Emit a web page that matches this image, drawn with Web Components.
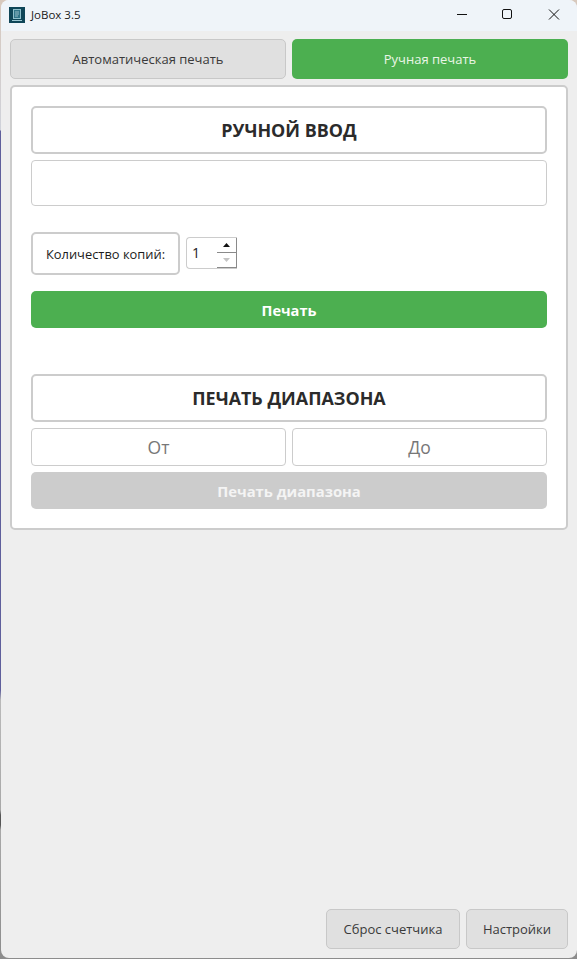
<!DOCTYPE html>
<html lang="ru">
<head>
<meta charset="utf-8">
<title>JoBox 3.5</title>
<style>
  html, body { margin: 0; height: 100%; }
  /* the desktop showing behind the window edge */
  body {
    width: 577px;
    height: 959px;
    overflow: hidden;
    font-family: "Open Sans", "Noto Sans", sans-serif;
    background: linear-gradient(180deg, #d8c9bd 0, #cfd2da 130px, #5f5f9c 131px, #5f5f9c 690px, #b9b9b9 700px, #a8a8a8 810px, #555 815px, #555 825px, #a8a8a8 830px, #8c8c8c 959px);
  }
</style>
</head>
<body>

<template id="app-window-tpl">
  <style>
    :host {
      display: flex;
      flex-direction: column;
      box-sizing: border-box;
      width: 576px;
      height: 958px;
      margin-left: 1px;
      background: #eeeeee;
      border-radius: 8px;
      overflow: hidden;
    }
    .content {
      flex: 1;
      display: flex;
      flex-direction: column;
      padding: 8px 9px 9px 9px;
      gap: 6px;
    }
    .tabs { display: grid; grid-template-columns: 1fr 1fr; gap: 6px; }
    .footer { margin-top: auto; display: flex; justify-content: flex-end; gap: 6px; }
  </style>
  <title-bar></title-bar>
  <div class="content">
    <div class="tabs">
      <app-button variant="tab">Автоматическая печать</app-button>
      <app-button variant="tab-active">Ручная печать</app-button>
    </div>
    <manual-panel></manual-panel>
    <div class="footer">
      <app-button variant="tab" style="width:134px">Сброс счетчика</app-button>
      <app-button variant="tab" style="width:102px">Настройки</app-button>
    </div>
  </div>
</template>

<template id="title-bar-tpl">
  <style>
    :host {
      display: flex;
      align-items: center;
      box-sizing: border-box;
      height: 31px;
      padding-bottom: 2px;
      background: #eff4f9;
      font-size: 11.5px;
      color: #1a1a1a;
      flex: none;
    }
    .logo { margin-left: 8px; width: 16px; height: 16px; flex: none; display: block; }
    .name { margin-left: 6px; }
    .controls { margin-left: auto; display: flex; }
    .controls svg { display: block; width: 46px; height: 29px; }
  </style>
  <svg class="logo" viewBox="0 0 16 16">
    <rect width="16" height="16" fill="#0f4658"/>
    <rect x="4.5" y="2.5" width="7" height="9" fill="#2f7488" stroke="#8fc0cc" stroke-width="1"/>
    <path d="M6 5h4M6 7h4M6 9h3" stroke="#c3dde3" stroke-width=".7"/>
    <path d="M3 13.5h10" stroke="#9cc7d2" stroke-width="1"/>
  </svg>
  <span class="name">JoBox 3.5</span>
  <div class="controls">
    <svg viewBox="0 0 46 29"><path d="M19 14.5h10" stroke="#111" stroke-width="1" fill="none"/></svg>
    <svg viewBox="0 0 46 29"><rect x="18.5" y="9.5" width="9" height="9" rx="1.5" stroke="#111" stroke-width="1" fill="none"/></svg>
    <svg viewBox="0 0 46 29" style="margin-right:1px"><path d="M19 9.5l10 10M29 9.5l-10 10" stroke="#111" stroke-width="1" fill="none"/></svg>
  </div>
</template>

<template id="app-button-tpl">
  <style>
    :host {
      display: flex;
      align-items: center;
      justify-content: center;
      box-sizing: border-box;
      border-radius: 5px;
      font-size: 13px;
      text-align: center;
    }
    :host([variant="tab"]) {
      height: 40px;
      background: #e0e0e0;
      border: 1px solid #c8c8c8;
      color: #3a3a3a;
    }
    :host([variant="tab-active"]) {
      height: 40px;
      background: #4caf50;
      color: #eaf6e6;
    }
    :host([variant="primary"]) {
      height: 37px;
      background: #4caf50;
      color: #ffffff;
      font-weight: 700;
      font-size: 14.6px;
    }
    :host([variant="disabled"]) {
      height: 37px;
      background: #cccccc;
      color: #f4f4f4;
      font-weight: 700;
      font-size: 14.8px;
    }
  </style>
  <slot></slot>
</template>

<template id="section-title-tpl">
  <style>
    :host {
      display: flex;
      align-items: center;
      justify-content: center;
      box-sizing: border-box;
      height: 48px;
      background: #fff;
      border: 2px solid #cccccc;
      border-radius: 5px;
      font-size: 17.9px;
      font-weight: 700;
      color: #2b2b2b;
    }
  </style>
  <slot></slot>
</template>

<template id="text-field-tpl">
  <style>
    :host {
      display: flex;
      align-items: center;
      justify-content: center;
      box-sizing: border-box;
      background: #fff;
      border: 1px solid #cccccc;
      border-radius: 4px;
      font-size: 17.5px;
      color: #777777;
    }
  </style>
  <slot></slot>
</template>

<template id="copies-spinner-tpl">
  <style>
    :host {
      display: flex;
      box-sizing: border-box;
      width: 51px;
      height: 32px;
      background: #fff;
      border: 1px solid #cccccc;
      border-right: none;
      border-radius: 4px 0 0 4px;
      font-size: 14px;
      color: #222;
    }
    .value { flex: 1; padding-left: 5px; line-height: 30px; }
    .arrows { width: 20px; display: flex; flex-direction: column; }
    .arrows div {
      flex: 1;
      display: flex;
      align-items: center;
      justify-content: center;
      border-right: 1px solid #8a8a8a;
      border-bottom: 1px solid #8a8a8a;
    }
    svg { display: block; width: 7px; height: 4px; }
  </style>
  <span class="value">1</span>
  <div class="arrows">
    <div><svg viewBox="0 0 7 4"><path d="M3.5 0L7 4H0z" fill="#111"/></svg></div>
    <div><svg viewBox="0 0 7 4"><path d="M0 0h7L3.5 4z" fill="#c4c4c4"/></svg></div>
  </div>
</template>

<template id="manual-panel-tpl">
  <style>
    :host {
      display: flex;
      flex-direction: column;
      box-sizing: border-box;
      height: 445px;
      padding: 19px 19px 19px 19px;
      background: #fff;
      border: 2px solid #cccccc;
      border-radius: 5px;
    }
    .code { height: 46px; margin-top: 6px; }
    .copies { display: flex; align-items: flex-start; gap: 6px; margin-top: 26px; }
    .copies copies-spinner { margin-top: 5px; }
    .copies-label {
      box-sizing: border-box;
      display: flex;
      align-items: center;
      justify-content: center;
      width: 149px;
      height: 43px;
      border: 2px solid #cccccc;
      border-radius: 5px;
      font-size: 12.9px;
      color: #1c1c1c;
    }
    .print { margin-top: 16px; }
    .range-title { margin-top: 46px; }
    .range { display: grid; grid-template-columns: 1fr 1fr; gap: 6px; margin-top: 6px; }
    .range text-field { height: 38px; }
    .range-print { margin-top: 6px; }
  </style>
  <section-title>РУЧНОЙ ВВОД</section-title>
  <text-field class="code"></text-field>
  <div class="copies">
    <div class="copies-label">Количество копий:</div>
    <copies-spinner></copies-spinner>
  </div>
  <app-button class="print" variant="primary">Печать</app-button>
  <section-title class="range-title">ПЕЧАТЬ ДИАПАЗОНА</section-title>
  <div class="range">
    <text-field>От</text-field>
    <text-field>До</text-field>
  </div>
  <app-button class="range-print" variant="disabled">Печать диапазона</app-button>
</template>

<app-window></app-window>

<script>
// Every element just clones its own template into an open shadow root
function defineFromTemplate(tag, templateId) {
  customElements.define(tag, class extends HTMLElement {
    constructor() {
      super();
      this.attachShadow({ mode: 'open' });
      const tpl = document.getElementById(templateId);
      this.shadowRoot.appendChild(tpl.content.cloneNode(true));
    }
  });
}

defineFromTemplate('app-button', 'app-button-tpl');
defineFromTemplate('section-title', 'section-title-tpl');
defineFromTemplate('text-field', 'text-field-tpl');
defineFromTemplate('copies-spinner', 'copies-spinner-tpl');
defineFromTemplate('title-bar', 'title-bar-tpl');
defineFromTemplate('manual-panel', 'manual-panel-tpl');
defineFromTemplate('app-window', 'app-window-tpl');
</script>
</body>
</html>
